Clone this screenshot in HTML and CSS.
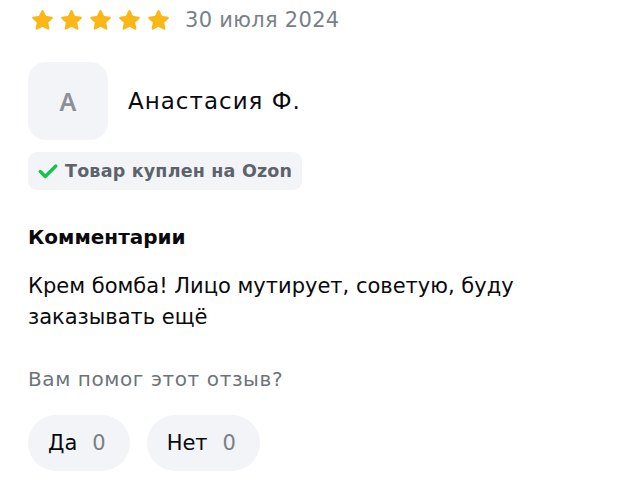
FILE: index.html
```html
<!DOCTYPE html>
<html lang="ru">
<head>
<meta charset="utf-8">
<link rel="stylesheet" href="styles.css">
</head>
<body>
<div class="review">
  <div class="rating-row">
    <div class="stars">
      <svg class="star" viewBox="0 0 24 24"><path d="M12 3l2.7 5.6 6.1.8-4.5 4.2 1.2 6.1L12 16.8l-5.5 2.9 1.2-6.1-4.5-4.2 6.1-.8z"/></svg>
      <svg class="star" viewBox="0 0 24 24"><path d="M12 3l2.7 5.6 6.1.8-4.5 4.2 1.2 6.1L12 16.8l-5.5 2.9 1.2-6.1-4.5-4.2 6.1-.8z"/></svg>
      <svg class="star" viewBox="0 0 24 24"><path d="M12 3l2.7 5.6 6.1.8-4.5 4.2 1.2 6.1L12 16.8l-5.5 2.9 1.2-6.1-4.5-4.2 6.1-.8z"/></svg>
      <svg class="star" viewBox="0 0 24 24"><path d="M12 3l2.7 5.6 6.1.8-4.5 4.2 1.2 6.1L12 16.8l-5.5 2.9 1.2-6.1-4.5-4.2 6.1-.8z"/></svg>
      <svg class="star" viewBox="0 0 24 24"><path d="M12 3l2.7 5.6 6.1.8-4.5 4.2 1.2 6.1L12 16.8l-5.5 2.9 1.2-6.1-4.5-4.2 6.1-.8z"/></svg>
    </div>
    <span class="date">30 июля 2024</span>
  </div>

  <div class="author">
    <div class="avatar">А</div>
    <div class="name">Анастасия Ф.</div>
  </div>

  <div class="badge">
    <svg class="check" viewBox="0 0 24 24"><path d="M3.5 12.5l5.5 5.5L20.5 6.5" fill="none" stroke="#10c44c" stroke-width="3.6" stroke-linecap="round" stroke-linejoin="round"/></svg>
    <span>Товар куплен на Ozon</span>
  </div>

  <div class="section-title">Комментарии</div>
  <p class="comment">Крем бомба! Лицо мутирует, советую, буду заказывать ещё</p>

  <div class="helpful">Вам помог этот отзыв?</div>
  <div class="votes">
    <button class="vote">Да<span class="count">0</span></button>
    <button class="vote">Нет<span class="count">0</span></button>
  </div>
</div>
</body>
</html>
```

FILE: styles.css
```css
* { box-sizing: border-box; }
html, body { margin: 0; padding: 0; background: #fff; }
body {
  font-family: "DejaVu Sans", "Noto Sans", sans-serif;
  color: #0b0b0f;
  width: 640px;
  height: 479px;
  overflow: hidden;
}
.review {
  padding: 5px 0 0 28px;
}
.rating-row {
  display: flex;
  align-items: center;
  height: 30px;
}
.stars {
  display: flex;
  gap: 4px;
  padding-left: 2px;
}
.star {
  width: 25px;
  height: 25px;
  fill: #fbb716;
  stroke: #fbb716;
  stroke-width: 2.2;
  stroke-linejoin: round;
}
.date {
  margin-left: 14px;
  font-size: 21px;
  letter-spacing: 0.3px;
  color: #7a8087;
}
.author {
  display: flex;
  align-items: center;
  margin-top: 27px;
}
.avatar {
  width: 80px;
  height: 78px;
  border-radius: 18px;
  background: #f2f4f8;
  color: #8b9097;
  font-family: "Noto Sans", sans-serif;
  font-size: 25px;
  font-weight: 600;
  display: flex;
  align-items: center;
  justify-content: center;
}
.name {
  margin-left: 20px;
  font-size: 23px;
  letter-spacing: 1px;
  color: #0a0a0d;
}
.badge {
  display: inline-flex;
  align-items: center;
  margin-top: 12px;
  height: 38px;
  padding: 0 10px 0 9px;
  background: #f2f4f8;
  border-radius: 9px;
  font-size: 17.5px;
  letter-spacing: 0.2px;
  font-weight: 700;
  color: #5c636b;
}
.check {
  width: 22px;
  height: 22px;
  margin-right: 6px;
}
.section-title {
  margin-top: 35px;
  font-size: 20px;
  font-weight: 700;
  color: #0a0a0d;
}
.comment {
  margin: 22px 0 0 0;
  width: 560px;
  font-size: 21px;
  line-height: 31px;
  color: #0a0a0d;
}
.helpful {
  margin-top: 34px;
  font-size: 20px;
  letter-spacing: 0.6px;
  color: #6d737b;
}
.votes {
  display: flex;
  gap: 17px;
  margin-top: 24px;
}
.vote {
  font-family: inherit;
  border: none;
  height: 56px;
  padding: 0 24px 0 20px;
  border-radius: 28px;
  background: #f2f4f8;
  font-size: 21px;
  color: #0a0a0d;
}
.count {
  margin-left: 15px;
  color: #7a8087;
}
```
